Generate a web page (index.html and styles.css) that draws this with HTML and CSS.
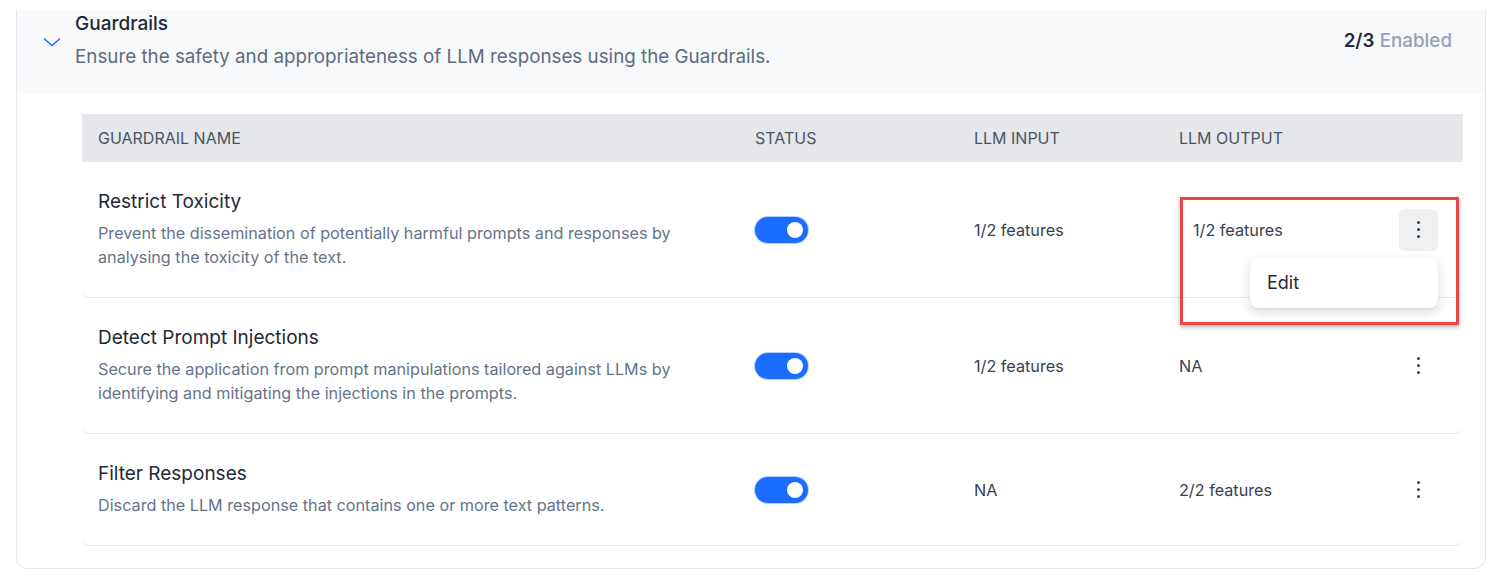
FILE: index.html
```html
<!DOCTYPE html>
<html>
<head>
<meta charset="utf-8">
<link rel="stylesheet" href="styles.css">
</head>
<body>
<div class="card">
  <div class="card-head">
    <svg class="chev" width="18" height="10" viewBox="0 0 18 10"><path d="M1 1.5 L9 8.5 L17 1.5" fill="none" stroke="#1a6dff" stroke-width="1.4"/></svg>
    <div class="head-text">
      <div class="head-title">Guardrails</div>
      <div class="head-sub">Ensure the safety and appropriateness of LLM responses using the Guardrails.</div>
    </div>
    <div class="head-count"><b>2/3</b> <span>Enabled</span></div>
  </div>
  <div class="table">
    <div class="thead">
      <div class="th">Guardrail Name</div>
      <div class="th">Status</div>
      <div class="th">LLM Input</div>
      <div class="th">LLM Output</div>
      <div class="th"></div>
    </div>
    <div class="tr">
      <div class="td name">
        <div class="g-title">Restrict Toxicity</div>
        <div class="g-desc">Prevent the dissemination of potentially harmful prompts and responses by analysing the toxicity of the text.</div>
      </div>
      <div class="td"><span class="toggle"><span class="knob"></span></span></div>
      <div class="td feat">1/2 features</div>
      <div class="td feat inset">1/2 features</div>
      <div class="td act">
        <button class="kebab active"><i></i><i></i><i></i></button>
        <div class="menu"><div class="menu-item">Edit</div></div>
      </div>
    </div>
    <div class="tr">
      <div class="td name">
        <div class="g-title">Detect Prompt Injections</div>
        <div class="g-desc">Secure the application from prompt manipulations tailored against LLMs by identifying and mitigating the injections in the prompts.</div>
      </div>
      <div class="td"><span class="toggle"><span class="knob"></span></span></div>
      <div class="td feat">1/2 features</div>
      <div class="td feat">NA</div>
      <div class="td act"><button class="kebab"><i></i><i></i><i></i></button></div>
    </div>
    <div class="tr">
      <div class="td name">
        <div class="g-title">Filter Responses</div>
        <div class="g-desc">Discard the LLM response that contains one or more text patterns.</div>
      </div>
      <div class="td"><span class="toggle"><span class="knob"></span></span></div>
      <div class="td feat">NA</div>
      <div class="td feat">2/2 features</div>
      <div class="td act"><button class="kebab"><i></i><i></i><i></i></button></div>
    </div>
  </div>
</div>
<div class="annot"></div>
</body>
</html>
```

FILE: styles.css
```css
* { box-sizing: border-box; }
html, body { margin: 0; padding: 0; background: #fff; }
body {
  font-family: Inter, "Noto Sans", sans-serif;
  color: #1f2937;
  padding-top: 10px;
  position: relative;
  height: 583px;
  overflow: hidden;
}
.card {
  margin-left: 16px;
  width: 1470px;
  border: 1px solid #e5e7eb;
  border-top: none;
  border-radius: 0 0 12px 12px;
  padding-bottom: 22px;
}
.card-head {
  height: 83px;
  background: #f8f9fb;
  display: flex;
  align-items: center;
  padding: 0 33px 22px 26px;
}
.chev { margin-right: 14px; margin-top: 2px; }
.head-text { flex: 1; display: flex; flex-direction: column; gap: 11px; }
.head-title { font-size: 19px; font-weight: 500; color: #1f2937; line-height: 22px; }
.head-sub { font-size: 18.8px; color: #5f6b7e; line-height: 22px; }
.head-count { font-size: 18.8px; }
.head-count b { font-weight: 600; color: #1f2937; }
.head-count span { color: #94a3b8; font-weight: 500; }
.table {
  margin: 21px 22px 0 65px;
}
.thead, .tr {
  display: grid;
  grid-template-columns: 657px 219px 205px 1fr 80px;
}
.thead {
  background: #e5e7eb;
  height: 48px;
  align-items: center;
}
.th {
  padding-left: 16px;
  font-size: 16px;
  text-transform: uppercase;
  color: #4b5563;
}
.tr {
  align-items: center;
  border-bottom: 1px solid #e5e7eb;
  border-radius: 0 0 8px 8px;
}
.td { padding-left: 16px; }
.name { padding: 27px 16px 28px; }
.g-title { font-size: 19px; line-height: 26px; color: #1f2937; }
.g-desc { font-size: 16.2px; line-height: 24px; color: #64748b; margin-top: 6px; padding-right: 20px; }
.feat { font-size: 16.2px; color: #374151; }
.feat.inset { padding-left: 30px; }
.toggle {
  display: inline-flex;
  align-items: center;
  justify-content: flex-end;
  width: 53px;
  height: 26px;
  border-radius: 13px;
  background: #1a6dff;
  padding: 0 5px;
  box-shadow: 0 0 0 1px #b8d0fb;
}
.knob { width: 16px; height: 16px; border-radius: 50%; background: #fff; }
.act { position: relative; display: flex; justify-content: flex-end; padding-right: 25px; }
.kebab {
  width: 42px; height: 42px;
  border: none; background: transparent;
  border-radius: 6px;
  display: flex; flex-direction: column; align-items: center; justify-content: center; gap: 3.5px;
  padding: 0;
}
.kebab.active { background: #eff0f2; }
.kebab i { width: 3.5px; height: 3.5px; border-radius: 50%; background: #374151; display: block; }
.menu {
  position: absolute;
  top: 49px;
  right: 25px;
  width: 188px;
  height: 50px;
  background: #fff;
  border-radius: 8px;
  box-shadow: 0 4px 12px rgba(0,0,0,0.14), 0 1px 3px rgba(0,0,0,0.06);
  display: flex; align-items: center;
  padding-left: 17px;
  z-index: 2;
}
.menu-item { font-size: 18px; color: #1f2937; }
.annot {
  position: absolute;
  left: 1180px; top: 197px;
  width: 279px; height: 128px;
  border: 3px solid #ef4444;
  box-shadow: 0 2px 4px rgba(0,0,0,0.3);
  z-index: 3;
}
```
